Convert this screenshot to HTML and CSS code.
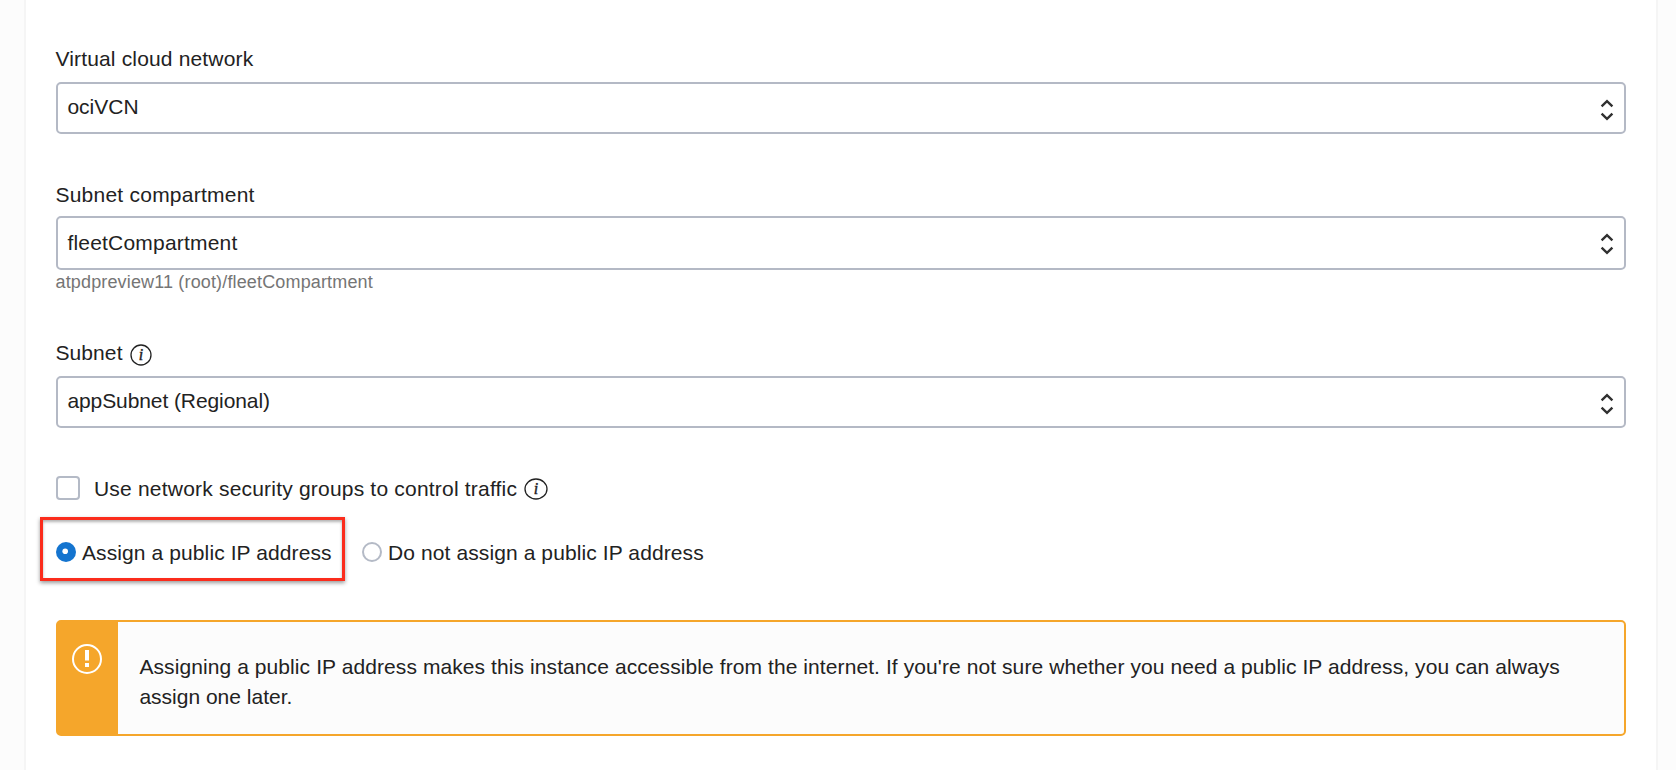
FILE: index.html
```
<!DOCTYPE html>
<html lang="en">
<head>
<meta charset="utf-8">
<title>Networking</title>
<link rel="stylesheet" href="styles.css">
</head>
<body>
<main class="panel">
  <section class="field">
    <div class="label"><span class="t-vcn">Virtual cloud network</span></div>
    <div class="select">
      <span class="value">ociVCN</span>
      <svg class="chevrons" viewBox="0 0 14 22"><path d="M1.6 7.4 7 2.2 12.4 7.4M1.6 14.6 7 19.8 12.4 14.6"/></svg>
    </div>
  </section>
  <section class="field field-compartment">
    <div class="label"><span class="t-comp">Subnet compartment</span></div>
    <div class="select select-tall">
      <span class="value t-fleet">fleetCompartment</span>
      <svg class="chevrons" viewBox="0 0 14 22"><path d="M1.6 7.4 7 2.2 12.4 7.4M1.6 14.6 7 19.8 12.4 14.6"/></svg>
    </div>
    <div class="hint">atpdpreview11 (root)/fleetCompartment</div>
  </section>
  <section class="field field-subnet">
    <div class="label"><span class="t-subnet">Subnet</span>
      <svg class="info" viewBox="0 0 22 22"><circle cx="11" cy="11" r="10"/><text x="11" y="16" text-anchor="middle">i</text></svg>
    </div>
    <div class="select">
      <span class="value t-app">appSubnet (Regional)</span>
      <svg class="chevrons" viewBox="0 0 14 22"><path d="M1.6 7.4 7 2.2 12.4 7.4M1.6 14.6 7 19.8 12.4 14.6"/></svg>
    </div>
  </section>
  <div class="check-row">
    <span class="checkbox"></span>
    <span class="check-text t-use">Use network security groups to control traffic</span>
    <svg class="info info-wide" viewBox="0 0 24 22"><ellipse cx="12" cy="11" rx="11" ry="10"/><text x="12" y="16" text-anchor="middle">i</text></svg>
  </div>
  <div class="radio-row">
    <label class="option highlighted">
      <svg class="radio" viewBox="0 0 20 20"><circle cx="10" cy="10" r="10" fill="#1474cf"/><circle cx="9.2" cy="9.2" r="2.8" fill="#fff"/></svg>
      <span class="t-assign">Assign a public IP address</span>
    </label>
    <label class="option">
      <svg class="radio" viewBox="0 0 20 20"><circle cx="10" cy="10" r="9" fill="#fff" stroke="#b4bac6" stroke-width="2"/></svg>
      <span class="t-assign">Do not assign a public IP address</span>
    </label>
  </div>
  <div class="alert">
    <div class="alert-side">
      <svg class="alert-icon" viewBox="0 0 30 30"><circle cx="15" cy="15" r="14"/><path d="M15 6v10.5M15 19v4"/></svg>
    </div>
    <p class="alert-text"><span class="t-line1">Assigning a public IP address makes this instance accessible from the internet. If you're not sure whether you need a public IP address, you can always</span> <span class="t-line2">assign one later.</span></p>
  </div>
</main>
</body>
</html>
```
FILE: styles.css
```
*, *::after { box-sizing: border-box; }
body {
  margin: 0;
  background: #fcfcfc;
  color: #222;
  font: 21px/24px "Liberation Sans", Arial, sans-serif;
}
.panel {
  height: 770px;
  margin: 0 18px 0 24px;
  padding: 47px 30px 0;
  background: #fff;
  border: solid #f5f5f5;
  border-width: 0 2px;
  display: flex;
  flex-direction: column;
  overflow: hidden;
}
.label { display: flex; height: 24px; margin: 0 0 11px -0.6px; white-space: nowrap; }
.select {
  display: flex;
  justify-content: space-between;
  height: 52px;
  padding: 11px 10px 0 9.4px;
  border: 2px solid #b4b9c5;
  border-radius: 5px;
}
.select-tall { height: 54px; padding-top: 13px; }
.chevrons { width: 14px; height: 22px; margin: 4px 0 0; fill: none; stroke: #303030; stroke-width: 2.4; }
.select-tall .chevrons { margin-top: 2px; }
.field-compartment { margin-top: 49px; }
.field-compartment .label { margin-bottom: 9px; }
.hint {
  height: 24px;
  margin: 1px 0 0 -0.5px;
  font-size: 18px;
  line-height: 22px;
  letter-spacing: .15px;
  color: #757575;
  white-space: nowrap;
}
.field-subnet { margin-top: 46px; }
.info { width: 22px; height: 22px; margin: 3px 0 0 7.6px; fill: none; stroke: #222; stroke-width: 1.3; }
.info-wide { width: 24px; margin: 2px 0 0 7px; }
.info text { font: italic 16px "Liberation Serif", serif; fill: #222; stroke: #222; stroke-width: .4; }
.check-row { display: flex; height: 24px; margin-top: 48px; white-space: nowrap; }
.checkbox { width: 24px; height: 24px; border: 2px solid #b4bac6; border-radius: 4px; }
.check-text { margin: 1px 0 0 14px; }
.radio-row { display: flex; gap: 30px; height: 24px; margin-top: 41px; white-space: nowrap; }
.option { position: relative; display: flex; gap: 6px; }
.radio { width: 20px; height: 20px; margin-top: 1px; }
.highlighted { width: 276px; }
.highlighted::after {
  content: "";
  position: absolute;
  top: -24px;
  left: -16px;
  width: 305px;
  height: 64px;
  border: 3px solid #fb2c1c;
  box-shadow: 0 2px 4px rgba(0, 0, 0, .4), inset 0 2px 3px rgba(0, 0, 0, .3);
}
.alert {
  display: flex;
  height: 116px;
  margin-top: 55px;
  background: #fcfcfc;
  border: 2px solid #f5a62b;
  border-radius: 5px;
}
.alert-side { flex: none; width: 60px; padding: 22px 0 0 14px; background: #f5a62b; }
.alert-icon { display: block; width: 30px; height: 30px; fill: none; stroke: #fff; stroke-width: 2; }
.alert-icon path { stroke-width: 4; }
.alert-text { margin: 30px 60px 0 21.4px; line-height: 30px; }
.t-line1 { white-space: nowrap; letter-spacing: .086px; }
.t-line2 { display: block; }
.t-vcn { letter-spacing: .16px; }
.t-comp { letter-spacing: .24px; }
.t-fleet { letter-spacing: .2px; }
.t-subnet { letter-spacing: .1px; }
.t-app { letter-spacing: -.09px; }
.t-use { letter-spacing: .2px; }
.t-assign { letter-spacing: .1px; }
```
